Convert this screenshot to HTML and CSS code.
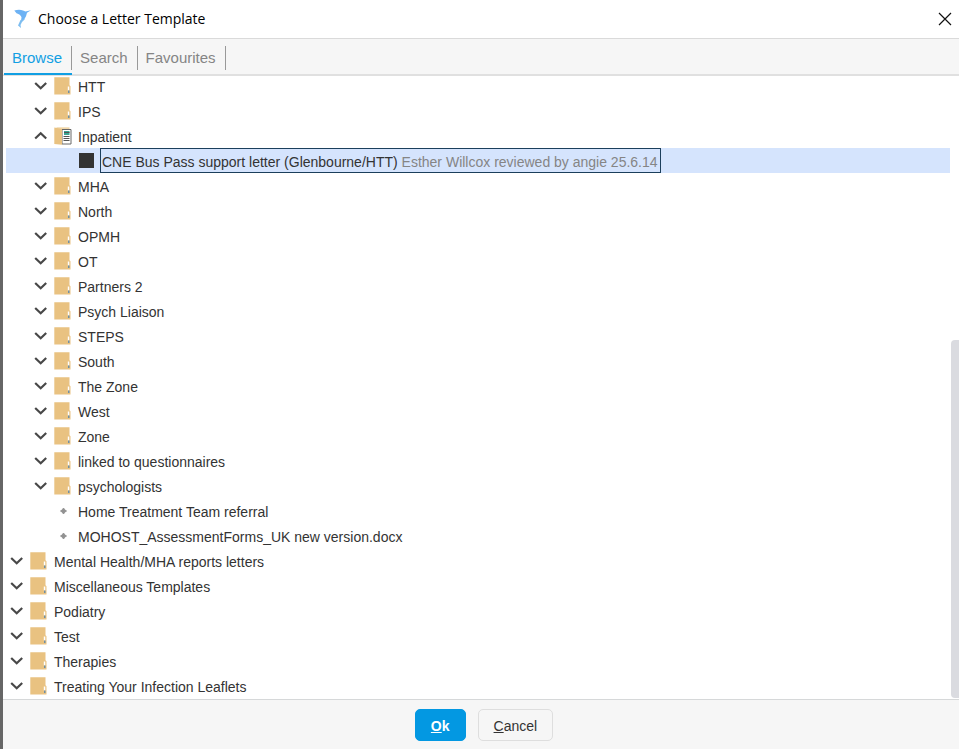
FILE: index.html
```html
<!DOCTYPE html>
<html lang="en">
<head>
<meta charset="utf-8">
<title>Choose a Letter Template</title>
<link rel="stylesheet" href="styles.css">
</head>
<body>
<svg class="sprite" aria-hidden="true">
  <symbol id="down" viewBox="0 0 14 10"><path d="M1.200 2 6.700 7.200 12.200 2" fill="none" stroke="#484848" stroke-width="2.200"/></symbol>
  <symbol id="up" viewBox="0 0 14 10"><path d="M1.200 7.500 6.700 2.300 12.200 7.500" fill="none" stroke="#484848" stroke-width="2.200"/></symbol>
  <symbol id="folder" viewBox="0 0 18 18"><path d="M.3.300h15.200v8l1 1V17.500H.3z" fill="#e9c281"/><path d="M13.800 9.500h1.500v4h-1.500z" fill="#fff"/><path d="M14 13.500h1.500V16H14z" fill="#6f8fa5"/></symbol>
  <symbol id="open" viewBox="0 0 18 18"><path d="M2.500.3h13V3h-13z" fill="#f0d6a8"/><path d="M8 2.500h9v14.500H8z" fill="#fff" stroke="#686868"/><path d="M.300.500 8 2v15.800L.300 17z" fill="#e9c281"/><path d="M10 4h5.500v4H10z" fill="#39a593"/><path d="M10 5.500h5.500M9.500 9.500h6M9.500 11.500h6M9.500 13.500h6" stroke="#555" stroke-width="1"/></symbol>
  <symbol id="leaf" viewBox="0 0 18 18"><path d="m9.500 6 1.200 1.800L12.500 9l-1.800 1.200L9.500 12l-1.200-1.800L6.500 9l1.800-1.200z" fill="#929292" stroke="#929292" stroke-width="1"/></symbol>
</svg>
<main class="dialog">
  <header class="titlebar">
    <svg class="logo" viewBox="0 0 18 20" aria-hidden="true"><path d="M.3 1.500q5-1.500 8.700 0l2.500 1L17 1.200l-4 2.500-1 3.500-2 3.500-3 1.500.5-4q-1-3-5-4z" fill="#6db2f4"/><path d="M6.500 11 11 10l-3 3-1.500 3 .5 3-3-2.500z" fill="#7dbdf0"/></svg>
    <h1>Choose a Letter Template</h1>
    <button class="close" type="button" aria-label="Close"><svg viewBox="0 0 14 14"><path d="m1 1 12 12M13 1 1 13" stroke="#111" stroke-width="1.200"/></svg></button>
  </header>
  <nav class="tabs" role="tablist">
    <button class="tab active" type="button" role="tab" aria-selected="true">Browse</button>
    <button class="tab" type="button" role="tab">Search</button>
    <button class="tab" type="button" role="tab">Favourites</button>
  </nav>
  <section class="browser">
    <ul class="tree">
      <li class="row nested"><button class="toggle" type="button" aria-label="Expand HTT"><svg><use href="#down"/></svg></button><svg class="icon"><use href="#folder"/></svg><span class="name">HTT</span></li>
      <li class="row nested"><button class="toggle" type="button" aria-label="Expand IPS"><svg><use href="#down"/></svg></button><svg class="icon"><use href="#folder"/></svg><span class="name">IPS</span></li>
      <li class="row nested"><button class="toggle" type="button" aria-label="Collapse Inpatient"><svg><use href="#up"/></svg></button><svg class="icon"><use href="#open"/></svg><span class="name">Inpatient</span></li>
      <li class="row selected"><span class="square"></span><span class="pick">CNE Bus Pass support letter (Glenbourne/HTT) <span class="note">Esther Willcox reviewed by angie 25.6.14</span></span></li>
      <li class="row nested"><button class="toggle" type="button" aria-label="Expand MHA"><svg><use href="#down"/></svg></button><svg class="icon"><use href="#folder"/></svg><span class="name">MHA</span></li>
      <li class="row nested"><button class="toggle" type="button" aria-label="Expand North"><svg><use href="#down"/></svg></button><svg class="icon"><use href="#folder"/></svg><span class="name">North</span></li>
      <li class="row nested"><button class="toggle" type="button" aria-label="Expand OPMH"><svg><use href="#down"/></svg></button><svg class="icon"><use href="#folder"/></svg><span class="name">OPMH</span></li>
      <li class="row nested"><button class="toggle" type="button" aria-label="Expand OT"><svg><use href="#down"/></svg></button><svg class="icon"><use href="#folder"/></svg><span class="name">OT</span></li>
      <li class="row nested"><button class="toggle" type="button" aria-label="Expand Partners 2"><svg><use href="#down"/></svg></button><svg class="icon"><use href="#folder"/></svg><span class="name">Partners 2</span></li>
      <li class="row nested"><button class="toggle" type="button" aria-label="Expand Psych Liaison"><svg><use href="#down"/></svg></button><svg class="icon"><use href="#folder"/></svg><span class="name">Psych Liaison</span></li>
      <li class="row nested"><button class="toggle" type="button" aria-label="Expand STEPS"><svg><use href="#down"/></svg></button><svg class="icon"><use href="#folder"/></svg><span class="name">STEPS</span></li>
      <li class="row nested"><button class="toggle" type="button" aria-label="Expand South"><svg><use href="#down"/></svg></button><svg class="icon"><use href="#folder"/></svg><span class="name">South</span></li>
      <li class="row nested"><button class="toggle" type="button" aria-label="Expand The Zone"><svg><use href="#down"/></svg></button><svg class="icon"><use href="#folder"/></svg><span class="name">The Zone</span></li>
      <li class="row nested"><button class="toggle" type="button" aria-label="Expand West"><svg><use href="#down"/></svg></button><svg class="icon"><use href="#folder"/></svg><span class="name">West</span></li>
      <li class="row nested"><button class="toggle" type="button" aria-label="Expand Zone"><svg><use href="#down"/></svg></button><svg class="icon"><use href="#folder"/></svg><span class="name">Zone</span></li>
      <li class="row nested"><button class="toggle" type="button" aria-label="Expand linked to questionnaires"><svg><use href="#down"/></svg></button><svg class="icon"><use href="#folder"/></svg><span class="name">linked to questionnaires</span></li>
      <li class="row nested"><button class="toggle" type="button" aria-label="Expand psychologists"><svg><use href="#down"/></svg></button><svg class="icon"><use href="#folder"/></svg><span class="name">psychologists</span></li>
      <li class="row nested"><span class="toggle"></span><svg class="icon"><use href="#leaf"/></svg><span class="name">Home Treatment Team referral</span></li>
      <li class="row nested"><span class="toggle"></span><svg class="icon"><use href="#leaf"/></svg><span class="name">MOHOST_AssessmentForms_UK new version.docx</span></li>
      <li class="row"><button class="toggle" type="button" aria-label="Expand Mental Health/MHA reports letters"><svg><use href="#down"/></svg></button><svg class="icon"><use href="#folder"/></svg><span class="name">Mental Health/MHA reports letters</span></li>
      <li class="row"><button class="toggle" type="button" aria-label="Expand Miscellaneous Templates"><svg><use href="#down"/></svg></button><svg class="icon"><use href="#folder"/></svg><span class="name">Miscellaneous Templates</span></li>
      <li class="row"><button class="toggle" type="button" aria-label="Expand Podiatry"><svg><use href="#down"/></svg></button><svg class="icon"><use href="#folder"/></svg><span class="name">Podiatry</span></li>
      <li class="row"><button class="toggle" type="button" aria-label="Expand Test"><svg><use href="#down"/></svg></button><svg class="icon"><use href="#folder"/></svg><span class="name">Test</span></li>
      <li class="row"><button class="toggle" type="button" aria-label="Expand Therapies"><svg><use href="#down"/></svg></button><svg class="icon"><use href="#folder"/></svg><span class="name">Therapies</span></li>
      <li class="row"><button class="toggle" type="button" aria-label="Expand Treating Your Infection Leaflets"><svg><use href="#down"/></svg></button><svg class="icon"><use href="#folder"/></svg><span class="name">Treating Your Infection Leaflets</span></li>
    </ul>
    <div class="thumb"></div>
  </section>
  <footer class="actions">
    <button class="btn primary" type="button"><u>O</u>k</button>
    <button class="btn" type="button"><u>C</u>ancel</button>
  </footer>
</main>
</body>
</html>
```
FILE: styles.css
```css
* { box-sizing: border-box; }
body {
  margin: 0;
  background: #fff;
  color: #333;
  font: 14px/18px "Liberation Sans", Arial, sans-serif;
}
button {
  margin: 0;
  padding: 0;
  border: 0;
  background: none;
  color: inherit;
  font: inherit;
}
svg { display: block; }
.sprite { display: none; }
.dialog {
  min-height: 100vh;
  display: flex;
  flex-direction: column;
  border-left: 3px solid #666;
}
.titlebar {
  height: 39px;
  display: flex;
  align-items: center;
  gap: 6px;
  padding: 0 7px 0 11px;
  border-bottom: 1px solid #dadada;
}
.logo { width: 18px; height: 20px; }
h1 {
  margin: 0;
  flex: 1;
  color: #000;
  font: 14px/20px "Open Sans", "Noto Sans", sans-serif;
}
.close svg { width: 14px; height: 14px; }
.tabs {
  height: 37px;
  display: flex;
  padding-left: 1px;
  background: #f6f6f6;
  border-bottom: 2px solid #e0e0e0;
}
.tab {
  position: relative;
  height: 36px;
  padding: 4px 10px 0 8px;
  color: #858585;
  border-bottom: 2px solid transparent;
  font-size: 15px;
}
.tab::after {
  content: "";
  position: absolute;
  top: 7px;
  right: 0;
  width: 1px;
  height: 24px;
  background: #999;
}
.tab.active {
  color: #119fe3;
  border-bottom-color: #119fe3;
}
.browser {
  position: relative;
  flex: 1;
  overflow: hidden;
}
.tree {
  margin: -3px 9px 0 3px;
  padding: 0;
  list-style: none;
}
.row {
  height: 25px;
  display: flex;
  align-items: center;
  padding-left: 4px;
}
.nested { padding-left: 28px; }
.toggle {
  width: 20px;
  flex: none;
}
.toggle svg { width: 14px; height: 10px; }
.icon {
  width: 18px;
  height: 18px;
  flex: none;
}
.name { padding: 3px 0 0 6px; }
.selected {
  gap: 6px;
  padding-left: 73px;
  background: #d5e4fd;
}
.square {
  width: 15px;
  height: 15px;
  background: #333;
}
.pick {
  height: 25px;
  padding: 4px 2px 0 1px;
  border: 1px solid #1c3f5c;
  white-space: nowrap;
}
.note { color: #858585; }
.thumb {
  position: absolute;
  right: 0;
  bottom: 1px;
  width: 8px;
  height: 358px;
  border-radius: 4px 0 0 4px;
  background: #dadbe0;
}
.actions {
  height: 50px;
  display: flex;
  justify-content: center;
  align-items: center;
  gap: 12px;
  padding-left: 6px;
  background: #f6f6f6;
  border-top: 1px solid #d6d8d9;
}
.btn {
  height: 32px;
  padding: 2px 15px 0;
  border: 1px solid #dedede;
  border-radius: 5px;
}
.primary {
  color: #fff;
  border-color: #0398e2;
  background: #0398e2;
  font-weight: bold;
}
```
